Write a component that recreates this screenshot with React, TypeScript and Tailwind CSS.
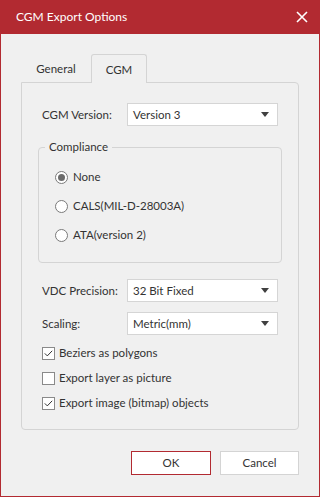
import React from "react";

const font = { fontFamily: 'Lato, "Noto Sans", sans-serif' };

function Select({ value }: { value: string }) {
  return (
    <div className="flex h-[23px] w-[151px] items-center justify-between border border-[#d5d5d5] bg-white pl-[5px] pr-[8px] text-[11.5px] text-[#333]">
      <span>{value}</span>
      <svg width="8" height="5" viewBox="0 0 8 5">
        <path d="M0 0h8L4 5z" fill="#404040" />
      </svg>
    </div>
  );
}

function Row({ label, value, className = "" }: { label: string; value: string; className?: string }) {
  return (
    <div className={`flex items-center justify-between ${className}`}>
      <span className="text-[11.5px] text-[#333]">{label}</span>
      <Select value={value} />
    </div>
  );
}

function Radio({ label, checked = false }: { label: string; checked?: boolean }) {
  return (
    <div className="flex h-[16px] items-center gap-[5px]">
      <span className="flex h-[13px] w-[13px] items-center justify-center rounded-full border border-[#7a7a7a] bg-white">
        {checked && <span className="h-[7px] w-[7px] rounded-full bg-[#6b6b6b]" />}
      </span>
      <span className="text-[11.5px] text-[#333]">{label}</span>
    </div>
  );
}

function Check({ label, checked = false }: { label: string; checked?: boolean }) {
  return (
    <div className="flex h-[16px] items-center gap-[4px]">
      <span className="flex h-[13px] w-[13px] items-center justify-center border border-[#8a8a8a] bg-white">
        {checked && (
          <svg width="9" height="7" viewBox="0 0 9 7">
            <path d="M0.8 3.4L3.3 5.9L8.2 0.8" fill="none" stroke="#333" strokeWidth="1" />
          </svg>
        )}
      </span>
      <span className="text-[11.5px] text-[#333]">{label}</span>
    </div>
  );
}

export default function App() {
  return (
    <div className="flex h-[497px] w-[320px] flex-col bg-[#f0f0f0]" style={font}>
      <div className="flex h-[34px] shrink-0 items-center justify-between bg-[#b22a31] pl-[16px] pr-[12px] text-white">
        <span className="text-[12px]">CGM Export Options</span>
        <svg width="12" height="12" viewBox="0 0 12 12">
          <path d="M1 1L11 11M11 1L1 11" stroke="white" strokeWidth="1.6" />
        </svg>
      </div>
      <div className="flex flex-1 flex-col border-x border-b border-[#b22a31] px-[20px]">
        <div className="mt-[20px] flex h-[28px] items-stretch">
          <div className="flex w-[70px] items-center justify-center pt-[2px] text-[11.5px] text-[#333]">General</div>
          <div className="relative -mb-px flex w-[56px] items-center justify-center rounded-t-[3px] border border-b-0 border-[#d4d4d4] bg-[#f0f0f0] pt-[2px] text-[11.5px] text-[#333]">
            CGM
          </div>
        </div>
        <div className="flex h-[348px] flex-col rounded-b-[4px] rounded-tr-[4px] border border-[#d4d4d4] px-[20px] pt-[20px]">
          <Row label="CGM Version:" value="Version 3" />
          <fieldset className="mx-[-4px] mt-[13px] h-[124px] rounded-[4px] border border-[#d4d4d4] pl-[16px]">
            <legend className="-ml-[10px] px-[4px] text-[11.5px] leading-[16px] text-[#333]">Compliance</legend>
            <div className="mt-[14px] flex flex-col gap-[13px]">
              <Radio label="None" checked />
              <Radio label="CALS(MIL-D-28003A)" />
              <Radio label="ATA(version 2)" />
            </div>
          </fieldset>
          <Row label="VDC Precision:" value="32 Bit Fixed" className="mt-[16px]" />
          <Row label="Scaling:" value="Metric(mm)" className="mt-[10px]" />
          <div className="mt-[10px] flex flex-col gap-[9px]">
            <Check label="Beziers as polygons" checked />
            <Check label="Export layer as picture" />
            <Check label="Export image (bitmap) objects" checked />
          </div>
        </div>
        <div className="mt-[21px] flex justify-end gap-[9px]">
          <button className="h-[24px] w-[80px] border border-[#b22a31] bg-white text-[11.5px] text-[#333]">OK</button>
          <button className="h-[24px] w-[79px] border border-[#d4d4d4] bg-white text-[11.5px] text-[#333]">Cancel</button>
        </div>
      </div>
    </div>
  );
}
